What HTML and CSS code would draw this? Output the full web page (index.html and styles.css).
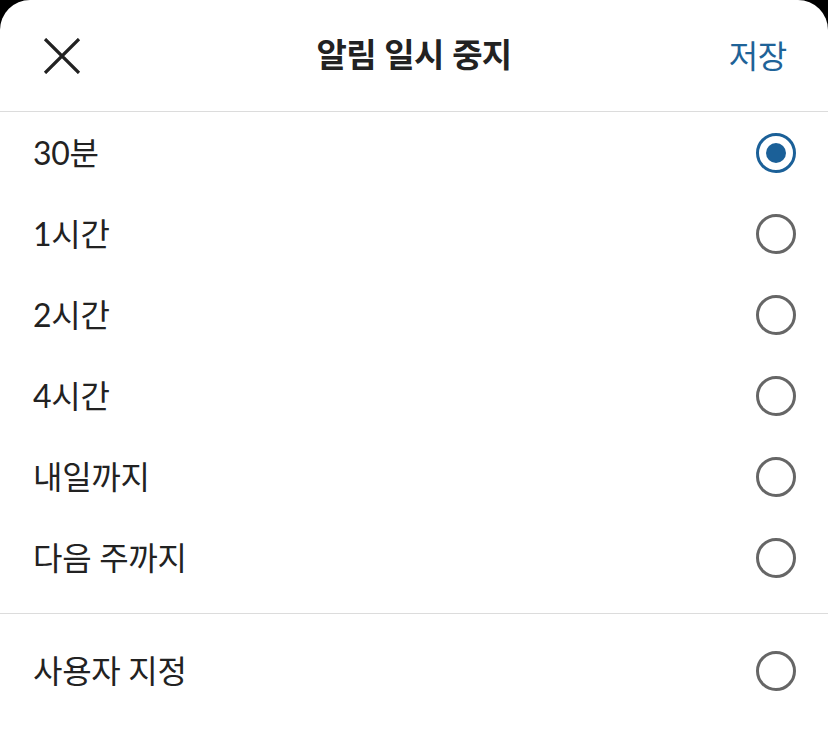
FILE: index.html
```html
<!DOCTYPE html>
<html lang="ko">
<head>
<meta charset="utf-8">
<link rel="stylesheet" href="styles.css">
</head>
<body>
<div class="sheet">
  <header class="header">
    <button class="close" aria-label="닫기">
      <svg width="38" height="36" viewBox="0 0 38 36"><path d="M2 1 L36 35 M36 1 L2 35" stroke="#222" stroke-width="3.2" fill="none"/></svg>
    </button>
    <h1 class="title">알림 일시 중지</h1>
    <button class="save">저장</button>
  </header>
  <ul class="list">
    <li class="row"><span class="label">30분</span><span class="radio checked"></span></li>
    <li class="row"><span class="label">1시간</span><span class="radio"></span></li>
    <li class="row"><span class="label">2시간</span><span class="radio"></span></li>
    <li class="row"><span class="label">4시간</span><span class="radio"></span></li>
    <li class="row"><span class="label">내일까지</span><span class="radio"></span></li>
    <li class="row"><span class="label">다음 주까지</span><span class="radio"></span></li>
  </ul>
  <ul class="list custom">
    <li class="row"><span class="label">사용자 지정</span><span class="radio"></span></li>
  </ul>
</div>
</body>
</html>
```
FILE: styles.css
```css
html, body {
  margin: 0;
  padding: 0;
  background: #000;
  height: 100%;
}
body {
  font-family: "Lato", "Noto Sans CJK KR", sans-serif;
  color: #222;
}
.sheet {
  background: #fff;
  border-radius: 30px 30px 0 0;
  height: 732px;
  overflow: hidden;
}
.header {
  height: 111px;
  border-bottom: 1px solid #dcdcdc;
  display: flex;
  align-items: center;
  justify-content: space-between;
  padding: 0 41px 0 43px;
  position: relative;
}
.close {
  background: none;
  border: 0;
  padding: 0;
  width: 38px;
  height: 36px;
  display: flex;
  margin-top: 1px;
}
.title {
  position: absolute;
  left: 0;
  right: 0;
  text-align: center;
  margin: -5px 0 0;
  font-family: "Noto Sans CJK KR", sans-serif;
  font-size: 33px;
  font-weight: 700;
  letter-spacing: -0.7px;
  pointer-events: none;
  color: #222;
}
.save {
  background: none;
  border: 0;
  padding: 0;
  margin-top: -4px;
  font-family: "Noto Sans CJK KR", sans-serif;
  font-size: 32px;
  color: #1f6398;
  letter-spacing: -0.3px;
}
.list {
  list-style: none;
  margin: 0;
  padding: 0 32px 15px 33px;
  border-bottom: 1px solid #dcdcdc;
}
.list.custom {
  border-bottom: 0;
  padding-top: 16px;
}
.row {
  height: 81px;
  display: flex;
  align-items: center;
  justify-content: space-between;
}
.label {
  font-size: 32px;
  letter-spacing: -0.3px;
  margin-top: -4px;
}
.radio {
  width: 40px;
  height: 40px;
  box-sizing: border-box;
  border: 3.5px solid #666;
  border-radius: 50%;
  display: flex;
  align-items: center;
  justify-content: center;
}
.radio.checked {
  border-color: #1b6098;
}
.radio.checked::after {
  content: "";
  width: 20px;
  height: 20px;
  border-radius: 50%;
  background: #1b6098;
}
```
